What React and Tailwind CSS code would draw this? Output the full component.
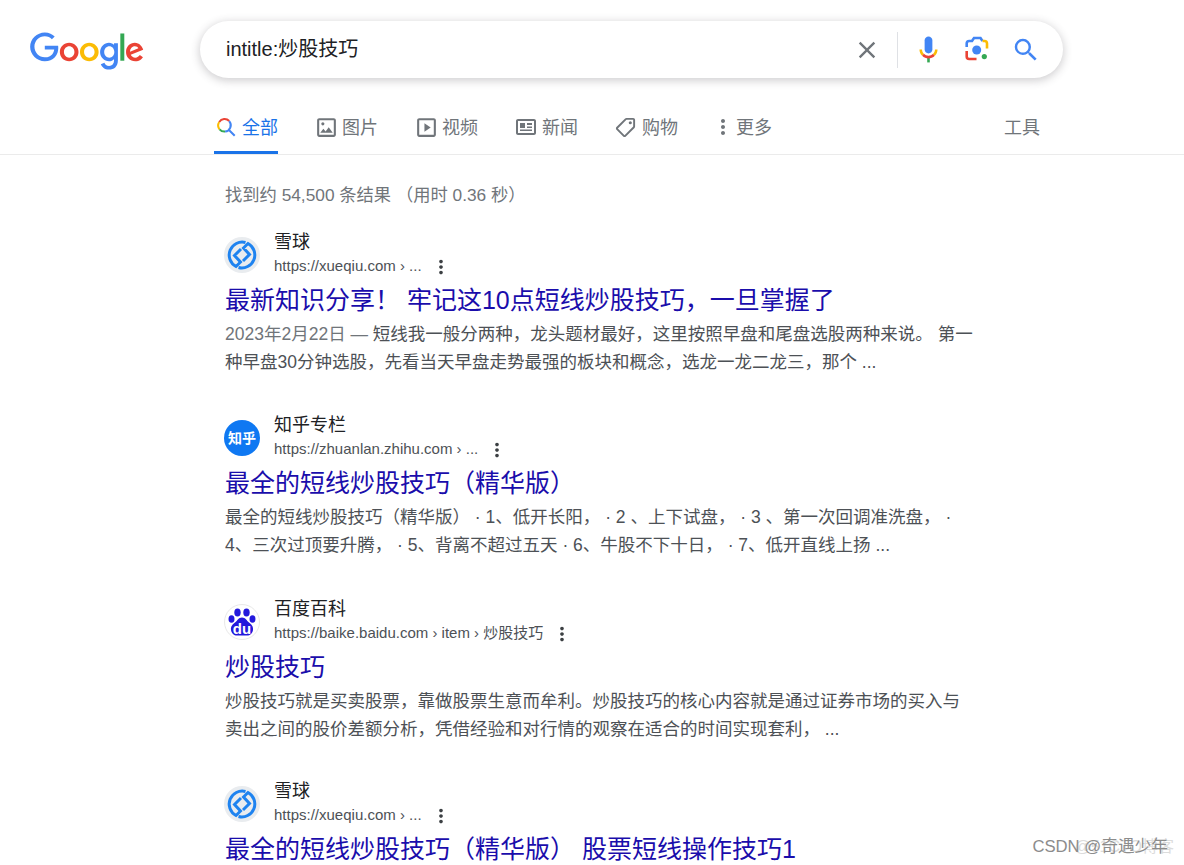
import React from 'react';

const GoogleLogo = () => (
  <svg viewBox="0 0 272 92" className="w-[114px] h-[39px] shrink-0 mt-1">
    <path fill="#EA4335" d="M115.75 47.18c0 12.77-9.99 22.18-22.25 22.18s-22.25-9.41-22.25-22.18C71.25 34.32 81.24 25 93.5 25s22.25 9.32 22.25 22.18zm-9.74 0c0-7.98-5.79-13.44-12.51-13.44S80.99 39.2 80.99 47.18c0 7.9 5.79 13.44 12.51 13.44s12.51-5.55 12.51-13.44z" />
    <path fill="#FBBC05" d="M163.75 47.18c0 12.77-9.99 22.18-22.25 22.18s-22.25-9.41-22.25-22.18c0-12.85 9.99-22.18 22.25-22.18s22.25 9.32 22.25 22.18zm-9.74 0c0-7.98-5.79-13.44-12.51-13.44s-12.51 5.46-12.51 13.44c0 7.9 5.79 13.44 12.51 13.44s12.51-5.55 12.51-13.44z" />
    <path fill="#4285F4" d="M209.75 26.34v39.82c0 16.38-9.66 23.07-21.08 23.07-10.75 0-17.22-7.19-19.66-13.07l8.48-3.53c1.51 3.61 5.21 7.87 11.17 7.87 7.31 0 11.84-4.51 11.84-13v-3.19h-.34c-2.18 2.69-6.38 5.04-11.68 5.04-11.09 0-21.25-9.66-21.25-22.09 0-12.52 10.16-22.26 21.25-22.26 5.29 0 9.49 2.35 11.68 4.96h.34v-3.61h9.25zm-8.56 20.92c0-7.81-5.21-13.52-11.84-13.52-6.72 0-12.35 5.71-12.35 13.52 0 7.73 5.63 13.36 12.35 13.36 6.63 0 11.84-5.63 11.84-13.36z" />
    <path fill="#34A853" d="M225 3v65h-9.5V3h9.5z" />
    <path fill="#EA4335" d="M262.02 54.48l7.56 5.04c-2.44 3.61-8.32 9.83-18.48 9.83-12.6 0-22.01-9.74-22.01-22.18 0-13.19 9.49-22.18 20.92-22.18 11.51 0 17.14 9.16 18.98 14.11l1.01 2.52-29.65 12.28c2.27 4.45 5.8 6.72 10.75 6.72 4.96 0 8.4-2.44 10.92-6.14zm-23.27-7.98l19.82-8.23c-1.09-2.77-4.37-4.7-8.23-4.7-4.95 0-11.84 4.37-11.59 12.93z" />
    <path fill="#4285F4" d="M35.29 41.41V32H67c.31 1.64.47 3.58.47 5.68 0 7.06-1.93 15.79-8.15 22.01-6.05 6.3-13.78 9.66-24.02 9.66C16.32 69.35.36 53.89.36 34.91.36 15.93 16.32.47 35.3.47c10.5 0 17.98 4.12 23.6 9.49l-6.64 6.64c-4.03-3.78-9.49-6.72-16.97-6.72-13.86 0-24.7 11.17-24.7 25.03 0 13.86 10.84 25.03 24.7 25.03 8.99 0 14.11-3.61 17.39-6.89 2.66-2.66 4.41-6.46 5.1-11.65l-22.49.01z" />
  </svg>
);

const MicIcon = () => (
  <svg viewBox="0 0 24 24" className="w-[31px] h-[31px]">
    <path fill="#4285f4" d="M12 15c1.66 0 3-1.31 3-2.97V5.01C15 3.35 13.66 2 12 2S9 3.34 9 5.01v7.02C9 13.69 10.34 15 12 15z" />
    <path fill="#34a853" d="M11 18h2v4h-2z" />
    <path fill="#fbbc04" d="M5 12h2c0 1.45.56 2.42 1.47 3.38L7.05 16.87C5.78 15.54 5 14.04 5 12z" />
    <path fill="#ea4335" d="M8.47 15.38C9.36 16.34 10.71 16.93 12 16.93s2.64-.59 3.53-1.55l1.42 1.49C15.59 18.3 13.68 19 12 19s-3.59-.7-4.95-2.13z" />
    <path fill="#fbbc04" d="M17 12h2c0 2.04-.78 3.54-2.05 4.87l-1.42-1.49C16.44 14.42 17 13.45 17 12z" />
  </svg>
);

const LensIcon = () => (
  <svg viewBox="0 0 36 36" className="w-9 h-9 -mt-[3px]" fill="none" strokeWidth="2.6">
    <circle cx="16.7" cy="20" r="4.5" fill="#4285f4" />
    <circle cx="24.300" cy="26.600" r="2.600" fill="#34a853" />
    <path stroke="#4285f4" d="M6.700 17V13.500q0-2.500 2.500-2.500H12L14 8H20.500L22.500 11" />
    <path stroke="#fbbc04" d="M22.500 11H24.500q2.500 0 2.500 2.500V18.500" />
    <path stroke="#ea4335" d="M6.700 21V26.500q0 2.500 2.500 2.500H16.500" />
  </svg>
);

const TabSearchIcon = () => (
  <svg viewBox="0 0 24 24" className="w-[22px] h-[22px] -mt-[3px]" fill="none" strokeWidth="2.2">
    <path stroke="#ea4335" d="M4.6 6.5A7 7 0 0 1 15.5 5.5" />
    <path stroke="#fbbc04" d="M4.6 6.5A7 7 0 0 0 5 14.5" />
    <path stroke="#34a853" d="M5 14.5A7 7 0 0 0 11 17" />
    <path stroke="#4285f4" d="M11 17A7 7 0 0 0 15.5 5.5M15.5 15.5L21.5 21.5" />
  </svg>
);

const DotsIcon = ({ className }) => (
  <svg viewBox="0 0 24 24" className={className} fill="currentColor">
    <path d="M12 8c1.1 0 2-.9 2-2s-.9-2-2-2-2 .9-2 2 .9 2 2 2zm0 2c-1.1 0-2 .9-2 2s.9 2 2 2 2-.9 2-2-.9-2-2-2zm0 6c-1.1 0-2 .9-2 2s.9 2 2 2 2-.9 2-2-.9-2-2-2z" />
  </svg>
);

const ImageIcon = () => (
  <svg viewBox="0 0 24 24" className="w-[25px] h-[25px] shrink-0 -mt-[3px]" fill="#70757a">
    <path d="M19 5v14H5V5h14m0-2H5c-1.1 0-2 .9-2 2v14c0 1.1.9 2 2 2h14c1.1 0 2-.9 2-2V5c0-1.1-.9-2-2-2zm-4.86 8.86l-3 3.87L9 13.14 6 17h12l-3.86-5.14z" />
    <circle cx="8.5" cy="8.5" r="1.5" />
  </svg>
);

const VideoIcon = () => (
  <svg viewBox="0 0 24 24" className="w-[25px] h-[25px] shrink-0 -mt-[3px]" fill="#70757a">
    <path d="M19 5v14H5V5h14m0-2H5c-1.1 0-2 .9-2 2v14c0 1.1.9 2 2 2h14c1.1 0 2-.9 2-2V5c0-1.1-.9-2-2-2z" />
    <path d="M10 8v8l6-4z" />
  </svg>
);

const NewsIcon = () => (
  <svg viewBox="0 0 24 24" className="w-[24px] h-[24px] shrink-0 -mt-[3px]" fill="#70757a">
    <path d="M20 6v12H4V6h16m0-2H4c-1.1 0-2 .9-2 2v12c0 1.1.9 2 2 2h16c1.1 0 2-.9 2-2V6c0-1.1-.9-2-2-2z" />
    <path d="M6 8h5v5H6zM13 8h5v2h-5zM13 11.5h5v1.5h-5zM6 14.500h12v1.500H6z" />
  </svg>
);

const TagIcon = () => (
  <svg viewBox="0 0 24 24" className="w-[23px] h-[23px] shrink-0 -mt-[3px] -ml-[2px]" fill="#70757a">
    <path d="M21.41 11.58l-9-9C12.05 2.22 11.55 2 11 2H4c-1.1 0-2 .9-2 2v7c0 .55.22 1.05.59 1.42l9 9c.36.36.86.58 1.41.58s1.05-.22 1.41-.59l7-7c.37-.36.59-.86.59-1.41s-.23-1.06-.59-1.42zM13 20l-9-9V4h7l9 9-7 7z" transform="rotate(90 12 12)" />
    <circle cx="17" cy="7" r="1.6" />
  </svg>
);

const XUEQIU_HOOK = 'M21.500 5.500A13 13 0 0 0 12 29.500L16.500 25L10.500 18.500L17 12';

const XueqiuIcon = () => (
  <div className="w-9 h-9 rounded-full bg-[#e9ecef] flex items-center justify-center shrink-0">
    <svg viewBox="0 0 36 36" className="w-9 h-9" fill="none" stroke="#1e83f0" strokeWidth="3">
      <path d={XUEQIU_HOOK} />
      <path d={XUEQIU_HOOK} transform="rotate(180 18 18)" />
    </svg>
  </div>
);

const ZhihuIcon = () => (
  <div className="w-9 h-9 rounded-full bg-[#0f78f2] flex items-center justify-center shrink-0 text-white text-[14px] font-bold">
    知乎
  </div>
);

const BaiduIcon = () => (
  <div className="w-9 h-9 rounded-full bg-white border border-[#e8e8e8] flex items-center justify-center shrink-0">
    <svg viewBox="0 0 36 36" className="w-9 h-9 shrink-0" fill="#2319dc">
      <ellipse cx="7.500" cy="15" rx="3" ry="3.800" />
      <ellipse cx="13.500" cy="8.500" rx="3.200" ry="4" />
      <ellipse cx="22.500" cy="8.500" rx="3.200" ry="4" />
      <ellipse cx="28.500" cy="15" rx="3" ry="3.800" />
      <path d="M18 13.500c-3.500 0-4.500 3-7 5-2.500 2-4.500 4-4 7.500.5 3.500 3 5.500 6 5.500h10c3 0 5.500-2 6-5.500.5-3.500-1.500-5.500-4-7.500-2.500-2-3.500-5-7-5z" />
      <text x="18" y="29.500" textAnchor="middle" fontSize="15" fontWeight="700" fill="#fff" fontFamily="Liberation Sans, sans-serif">du</text>
    </svg>
  </div>
);

const tabs = [
  { label: '图片', icon: <ImageIcon /> },
  { label: '视频', icon: <VideoIcon /> },
  { label: '新闻', icon: <NewsIcon /> },
  { label: '购物', icon: <TagIcon /> },
];

const results = [
  {
    icon: <XueqiuIcon />,
    site: '雪球',
    url: 'https://xueqiu.com › ...',
    title: '最新知识分享！ 牢记这10点短线炒股技巧，一旦掌握了',
    date: '2023年2月22日 — ',
    lines: ['短线我一般分两种，龙头题材最好，这里按照早盘和尾盘选股两种来说。 第一', '种早盘30分钟选股，先看当天早盘走势最强的板块和概念，选龙一龙二龙三，那个 ...'],
    gap: 'mb-[36px]',
  },
  {
    icon: <ZhihuIcon />,
    site: '知乎专栏',
    url: 'https://zhuanlan.zhihu.com › ...',
    title: '最全的短线炒股技巧（精华版）',
    lines: ['最全的短线炒股技巧（精华版） · 1、低开长阳， · 2 、上下试盘， · 3 、第一次回调准洗盘， ·', '4、三次过顶要升腾， · 5、背离不超过五天 · 6、牛股不下十日， · 7、低开直线上扬 ...'],
    gap: 'mb-[37px]',
  },
  {
    icon: <BaiduIcon />,
    site: '百度百科',
    url: 'https://baike.baidu.com › item › 炒股技巧',
    title: '炒股技巧',
    lines: ['炒股技巧就是买卖股票，靠做股票生意而牟利。炒股技巧的核心内容就是通过证券市场的买入与', '卖出之间的股价差额分析，凭借经验和对行情的观察在适合的时间实现套利， ...'],
    gap: 'mb-[35px]',
  },
  {
    icon: <XueqiuIcon />,
    site: '雪球',
    url: 'https://xueqiu.com › ...',
    title: '最全的短线炒股技巧（精华版） 股票短线操作技巧1',
    lines: [],
    gap: '',
  },
];

const Result = ({ item }) => (
  <div className={item.gap}>
    <div className="flex items-center h-[50px] -ml-px">
      <div className="mt-[2px]">{item.icon}</div>
      <div className="ml-[14px]">
        <div className="h-[25px] leading-[25px] text-[18px] text-[#202124]">{item.site}</div>
        <div className="flex items-center h-[24px] text-[15px] text-[#4d5156]">
          <span>{item.url}</span>
          <DotsIcon className="w-[22px] h-[22px] ml-2 text-[#3c4043]" />
        </div>
      </div>
    </div>
    <div className="h-[41px] leading-[43px] text-[25px] text-[#1a0dab] whitespace-pre">{item.title}</div>
    <div className="text-[17.5px] leading-[28px] text-[#4d5156] whitespace-pre">
      {item.lines.map((line, i) => (
        <div key={i}>
          {i === 0 && item.date && <span className="text-[#70757a]">{item.date}</span>}
          {line}
        </div>
      ))}
    </div>
  </div>
);

export default function App() {
  return (
    <div className="relative h-[865px] overflow-hidden bg-white font-['Liberation_Sans','Noto_Sans_CJK_SC',sans-serif]">
      {/* Header */}
      <div className="flex items-center pt-[21px] pl-[30px]">
        <GoogleLogo />
        <div className="ml-[56px] w-[863px] h-[57px] rounded-full bg-white shadow-[0_2px_8px_1px_rgba(64,60,67,0.24)] flex items-center pl-[26px] pr-[22px]">
          <span className="text-[20px] text-[#202124] flex-1 mb-[2px]">intitle:炒股技巧</span>
          <svg viewBox="0 0 24 24" className="w-7 h-7" fill="#70757a">
            <path d="M19 6.410L17.590 5 12 10.590 6.410 5 5 6.410 10.590 12 5 17.590 6.410 19 12 13.410 17.590 19 19 17.590 13.410 12z" />
          </svg>
          <div className="w-px h-9 bg-[#dfe1e5] ml-4 mr-[15px]" />
          <MicIcon />
          <div className="ml-4"><LensIcon /></div>
          <svg viewBox="0 0 24 24" className="w-[30px] h-[30px] ml-[15px]" fill="#4285f4">
            <path d="M15.500 14h-.790l-.280-.270A6.470 6.470 0 0 0 16 9.500 6.500 6.500 0 1 0 9.500 16c1.610 0 3.090-.590 4.230-1.570l.270.280v.790l5 4.990L20.490 19l-4.990-5zm-6 0C7.010 14 5 11.990 5 9.500S7.010 5 9.500 5 14 7.010 14 9.500 11.990 14 9.500 14z" />
          </svg>
        </div>
      </div>

      {/* Tabs */}
      <div className="flex items-center h-[52px] mt-[25px] pl-[214px] pr-[144px] border-b border-[#ebebeb] text-[18px] text-[#70757a]">
        <div className="relative flex items-center h-full gap-1 mr-9 text-[#1a73e8]">
          <div className="w-6 flex justify-center"><TabSearchIcon /></div>
          <span>全部</span>
          <div className="absolute left-0 right-0 bottom-0 h-[3px] bg-[#1a73e8]" />
        </div>
        {tabs.map((tab) => (
          <div key={tab.label} className="flex items-center gap-1 mr-9">
            <div className="w-6 flex justify-center">{tab.icon}</div>
            <span>{tab.label}</span>
          </div>
        ))}
        <div className="flex items-center gap-1">
          <div className="w-[18px] flex justify-center">
            <DotsIcon className="w-6 h-6 shrink-0 -mt-[3px]" />
          </div>
          <span>更多</span>
        </div>
        <span className="ml-auto">工具</span>
      </div>

      {/* Results */}
      <div className="pl-[225px] pt-[26px]">
        <div className="h-[48px] text-[17.3px] leading-[28px] text-[#70757a] whitespace-pre">找到约 54,500 条结果 （用时 0.36 秒）</div>
        {results.map((item, i) => (
          <Result key={i} item={item} />
        ))}
      </div>

      {/* Watermark */}
      <div className="absolute right-[10px] bottom-[6px] text-[16px] text-[#dcdcdc] whitespace-pre">@51CTO博客</div>
      <div className="absolute right-[16px] bottom-[6px] text-[16.7px] text-[#8c8c8c] whitespace-pre">CSDN @奇遇少年</div>
    </div>
  );
}
